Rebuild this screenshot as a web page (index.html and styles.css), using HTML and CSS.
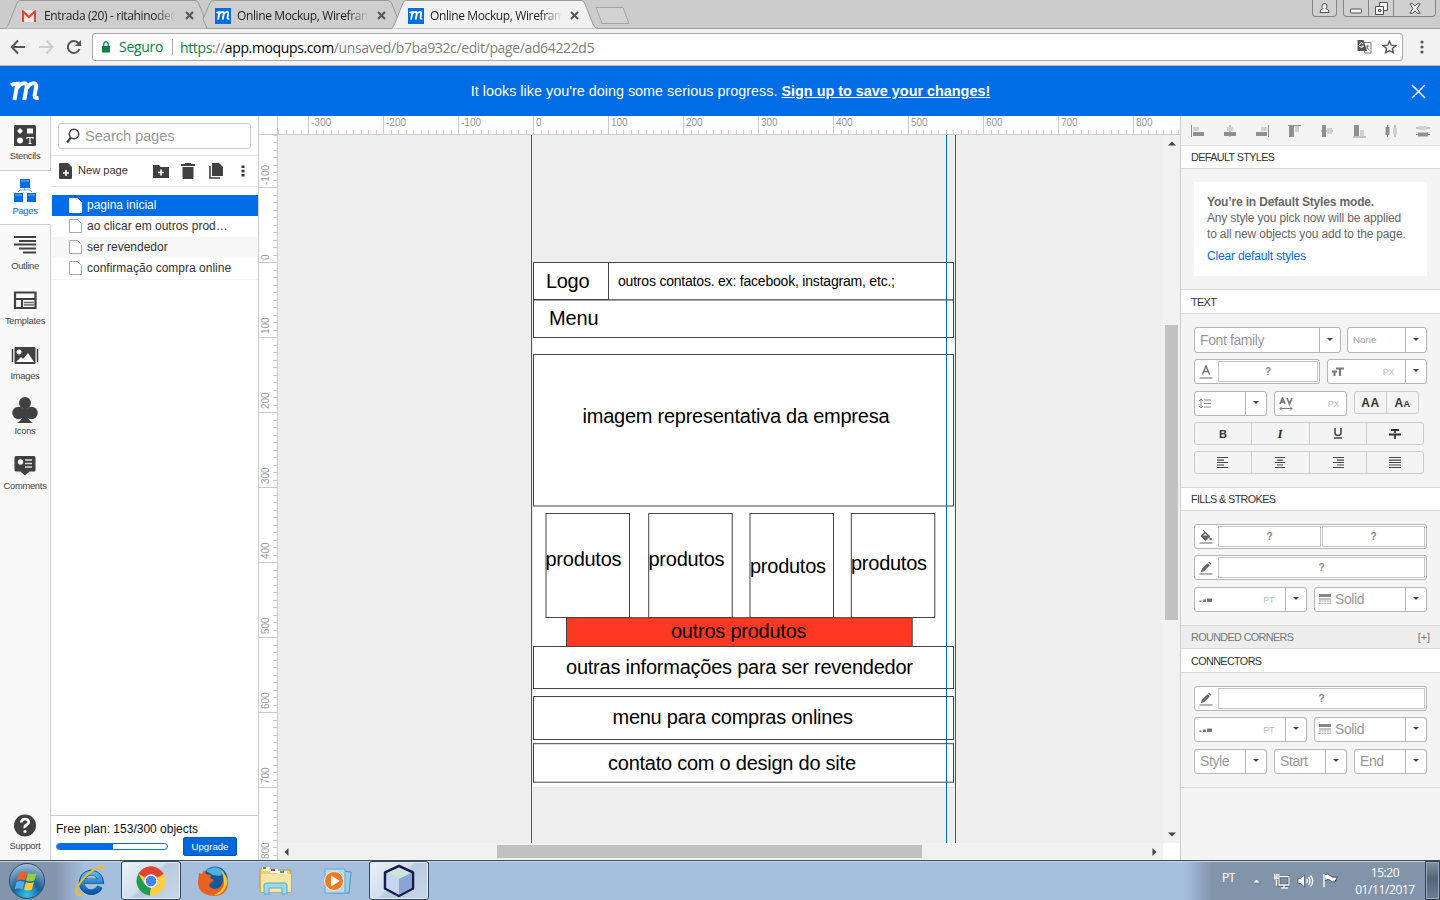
FILE: index.html
```html
<!DOCTYPE html>
<html lang="pt">
<head>
<meta charset="utf-8">
<title>Online Mockup, Wireframe</title>
<link rel="stylesheet" href="styles.css">
</head>
<body>
<svg class="defs" width="0" height="0">
  <defs>
    <symbol id="m" viewBox="0 0 30 22"><path d="M1 5.200Q3 3.800 7.300 3.800L4.500 20M6.800 8.500Q10.500 3.300 14 3.300Q17.300 3.300 16.600 7.300L14.300 20M16.400 8.500Q20 3.300 23.500 3.300Q26.800 3.300 26.100 7.300L24.600 15.500Q24.200 18.600 28.600 18" fill="none" stroke="#fff" stroke-width="4"/></symbol>
    <symbol id="pencil" viewBox="0 0 14 14"><path d="M2 11l.7-3L8.500 2.200l2.300 2.300L5 10.300zM9.300 1.500l.9-.9 2.300 2.300-.9.900z" fill="#666"/><path d="M.5 12h13v2H.5z" fill="#b9b1ae"/></symbol>
    <symbol id="weight" viewBox="0 0 14 6"><path d="M.5 3.500h2v1.500h-2zM4 2.500h3V5H4zM8 1.500h5V5H8z" fill="#777"/></symbol>
    <symbol id="lines" viewBox="0 0 12 10"><path d="M0 0h12v3H0zM0 4.500h12v1H0z" fill="#888"/><path d="M0 7h12M0 9.300h12" stroke="#999" stroke-dasharray="2 .6"/></symbol>
  </defs>
</svg>

<header class="tabs">
  <div class="tab">
    <svg class="shape" width="207" height="29"><path d="M.5 28.500Q3 26 4 23L12 3Q13 .5 15.500 .5H190Q192.500 .5 193.500 3L202 24Q203.500 28 206 28.500"/></svg>
    <svg width="14" height="12" viewBox="0 0 14 12"><path d="M0 0h14v12H0z" fill="#eee"/><path d="M1 12V1.500l6 5.500 6-5.500V12" fill="none" stroke="#d9463a" stroke-width="2.200"/></svg>
    <span class="title">Entrada (20) - ritahinode@</span><svg class="x" width="9" height="9"><path d="M1 1l7 7M8 1L1 8"/></svg>
  </div>
  <div class="tab">
    <svg class="shape" width="207" height="29"><path d="M5 19L12 3Q13 .5 15.500 .5H190Q192.500 .5 193.500 3L202 24Q203.500 28 206 28.500H9z" /></svg>
    <span class="fav"><svg width="14" height="11"><use href="#m"/></svg></span>
    <span class="title">Online Mockup, Wirefram</span><svg class="x" width="9" height="9"><path d="M1 1l7 7M8 1L1 8"/></svg>
  </div>
  <div class="tab active">
    <svg class="shape" width="207" height="30"><path d="M.5 28.500Q3 26 4 23L12 3Q13 .5 15.500 .5H190Q192.500 .5 193.500 3L202 24Q203.500 28 206 28.500"/></svg>
    <span class="fav"><svg width="14" height="11"><use href="#m"/></svg></span>
    <span class="title">Online Mockup, Wirefram</span><svg class="x" width="9" height="9"><path d="M1 1l7 7M8 1L1 8"/></svg>
  </div>
  <svg class="newtab" width="35" height="18"><path d="M1 .500H28L34 16.500H7z" fill="#d2d2d2" stroke="#a2a2a2"/></svg>
  <div class="winctl">
    <span class="wb w24"><svg width="11" height="11" viewBox="0 0 11 11"><path d="M3 3a2.500 2.500 0 015 0Q8 5 6.800 5.600Q10 6 10 9.500H1Q1 6 4.200 5.600Q3 5 3 3z"/></svg></span>
    <span class="wgroup"><span class="wb w25"><svg width="12" height="11"><rect x=".5" y="6" width="11" height="4" rx="1"/></svg></span><span class="wb w25"><svg width="13" height="13"><path d="M4.500 .5h8v8h-8z"/><path d="M.5 4.500h8v8h-8zM3.500 7.500h2.500v2H3.500z"/></svg></span><span class="wb w42"><svg width="12" height="11"><path d="M.8 .8h3L6 3.200 8.200 .8h3L8 5.500l3.200 4.700h-3L6 7.800 3.800 10.200h-3L4 5.500z"/></svg></span></span>
  </div>
</header>

<div class="toolbar">
  <svg width="86" height="20" viewBox="0 0 86 20"><path d="M16 10H3M9 3.500L2.800 10l6.200 6.500" stroke="#555" stroke-width="2" fill="none"/><path d="M30 10h13M37.500 3.500l6 6.500-6 6.500" stroke="#ccc" stroke-width="2" fill="none"/><path d="M69.500 6.200A6 6 0 1070.500 12" stroke="#555" stroke-width="2" fill="none"/><path d="M72 3v6h-6z" fill="#555"/></svg>
  <div class="omni">
    <svg width="8" height="12" viewBox="0 0 8 12"><path d="M0 5h8v6.500H0z" fill="#0b8043"/><path d="M1.800 5V3a2.200 2.200 0 014.400 0v2" fill="none" stroke="#0b8043" stroke-width="1.300"/></svg>
    <span class="secure">Seguro</span>
    <span class="url"><i>https</i>://<b>app.moqups.com</b>/unsaved/b7ba932c/edit/page/ad64222d5</span>
    <svg class="trans" width="15" height="14" viewBox="0 0 15 14"><path d="M5 2.500h9V13H8z" fill="#fff" stroke="#777"/><path d="M.5 0h6l3.500 11H.5z" fill="#555"/><path d="M6.200 3.800A2.200 2.200 0 106.500 6H4.500" fill="none" stroke="#fff"/><path d="M8.500 6h4M10.500 5v1Q10.500 9 8.500 10M9.500 7l3 3.500" stroke="#777" fill="none"/></svg>
    <svg width="15" height="14" viewBox="0 0 15 14"><path d="M7.500 1.200l1.800 4 4.400.4-3.300 2.900 1 4.300-3.900-2.300-3.900 2.300 1-4.300L1.300 5.600l4.400-.4z" fill="none" stroke="#555" stroke-width="1.400"/></svg>
  </div>
  <svg width="4" height="14"><circle cx="2" cy="2" r="1.600" fill="#555"/><circle cx="2" cy="7" r="1.600" fill="#555"/><circle cx="2" cy="12" r="1.600" fill="#555"/></svg>
</div>

<div class="banner">
  <svg class="logo" width="30" height="22"><use href="#m"/></svg>
  <p class="msg">It looks like you're doing some serious progress. <a>Sign up to save your changes!</a></p>
  <svg width="15" height="15"><path d="M1 1l13 13M14 1L1 14" stroke="#fff" stroke-width="1.500"/></svg>
</div>

<main class="app">
  <nav class="rail">
    <div class="item first"><svg width="28" height="28" viewBox="0 0 28 28"><rect x="3" y="4" width="22" height="21" rx="1.500" fill="#404040"/><path d="M9 7l3 3-3 3-3-3zM16 7.500h6v5h-6z" fill="#fff"/><circle cx="9" cy="19.500" r="3" fill="#fff"/><path d="M16 18v-1.500h6V18M19 16.500v6M17.500 22.500h3" stroke="#fff" stroke-width="1.200" fill="none"/></svg>Stencils</div>
    <div class="item on"><svg width="28" height="28" viewBox="0 0 28 28"><path d="M9 3h10v9H9zM3 17h9v9H3zM16 17h9v9h-9z" fill="#006ce6"/><path d="M10 5h8M4 19h7M17 19h7" stroke="#7db4f4"/><path d="M13.500 12v2M7 16l2-2h10l2 2" stroke="#6da8ee" fill="none"/></svg>Pages</div>
    <div class="item third"><svg width="28" height="28" viewBox="0 0 28 28"><path d="M4 6h22M9 10h17M4 13.500h22M9 17.500h17M13 21.500h13" transform="translate(-1 0)" stroke="#404040" stroke-width="2"/></svg>Outline</div>
    <div class="item"><svg width="28" height="28" viewBox="0 0 28 28"><path d="M4 6.500h20.500v15.500H4zM4 13h20.500M11 13v9" fill="none" stroke="#404040" stroke-width="2.200"/><path d="M13 16.500h10M13 19h10" stroke="#666" stroke-width="1.300"/></svg>Templates</div>
    <div class="item"><svg width="28" height="28" viewBox="0 0 28 28"><rect x="3.500" y="6" width="21" height="17" rx="1" fill="#404040"/><path d="M1.500 8v13M26.500 8v13" stroke="#404040" stroke-width="1.500"/><circle cx="8" cy="11" r="2.500" fill="#fff"/><path d="M5 21l5-5 2 2 5-6 6 9z" fill="#fff"/></svg>Images</div>
    <div class="item"><svg width="28" height="28" viewBox="0 0 28 28"><g fill="#404040"><circle cx="14" cy="7" r="6"/><circle cx="7.500" cy="17" r="6.200"/><circle cx="20.500" cy="17" r="6.200"/><path d="M12 10h4v10q2 5 6 7H6q4-2 6-7z"/></g></svg>Icons</div>
    <div class="item"><svg width="28" height="28" viewBox="0 0 28 28"><path d="M5 5h18q1.500 0 1.500 1.500v12.500q0 1.500-1.500 1.500h-4.500L14 24.500l-4.500-4H5q-1.500 0-1.500-1.500V6.500Q3.500 5 5 5z" fill="#404040"/><circle cx="9.500" cy="11" r="2.700" fill="#fff"/><path d="M14 9h7M14 12.500h7M14 16h7" stroke="#ddd" stroke-width="1.300"/></svg>Comments</div>
    <div class="item support"><svg width="28" height="28" viewBox="0 0 28 28"><circle cx="14" cy="14.500" r="11" fill="#404040"/><path d="M10.300 11.500Q10.500 8 14 8T17.700 11Q17.700 13 15.500 14T14 17" fill="none" stroke="#fff" stroke-width="2.700"/><circle cx="14" cy="20.500" r="1.600" fill="#fff"/></svg>Support</div>
  </nav>

  <section class="pages">
    <div class="search"><svg width="14" height="16" viewBox="0 0 14 16"><circle cx="8" cy="6" r="4.700" fill="none" stroke="#404040" stroke-width="1.500"/><path d="M5 9.500L1 14.500" stroke="#404040" stroke-width="2.200"/></svg>Search pages</div>
    <div class="ptools">
      <svg width="13" height="16" viewBox="0 0 13 16"><path d="M0 1q0-1 1-1h8l4 4v11q0 1-1 1H1q-1 0-1-1z" fill="#404040"/><path d="M7 7v6M4 10h6" stroke="#fff" stroke-width="1.600"/></svg>
      <span>New page</span>
      <svg width="16" height="14" viewBox="0 0 16 14"><path d="M0 1h6l1.500 2H16v11H0z" fill="#404040"/><path d="M8 5.500v6M5 8.500h6" stroke="#fff" stroke-width="1.600"/></svg>
      <svg class="trash" width="14" height="16" viewBox="0 0 14 16"><path d="M0 1h4V0h6v1h4v2H0zM1.500 4h11v11q0 1-1 1h-9q-1 0-1-1z" fill="#404040"/></svg>
      <svg class="copy" width="14" height="16" viewBox="0 0 14 16"><path d="M3 0h7l4 4v9H3z" fill="#404040"/><path d="M1 3v12h10" fill="none" stroke="#404040" stroke-width="1.600"/></svg>
      <svg class="more" width="4" height="12"><path d="M.5 .5h3v2.500h-3zM.5 4.700h3v2.500h-3zM.5 9h3v2.500h-3z" fill="#333"/></svg>
    </div>
    <ul class="list">
      <li class="sel"><svg width="13" height="15"><path d="M.5 .5h8l4 4v10H.5z"/></svg><span>pagina inicial</span></li>
      <li><svg width="13" height="15"><path d="M.5 .5h8l4 4v9H.5z"/></svg><span>ao clicar em outros prod…</span></li>
      <li class="alt"><svg width="13" height="15"><path d="M.5 .5h8l4 4v9H.5z"/></svg><span>ser revendedor</span></li>
      <li><svg width="13" height="15"><path d="M.5 .5h8l4 4v9H.5z"/></svg><span>confirmação compra online</span></li>
    </ul>
    <footer class="plan">
      <p>Free plan: 153/300 objects</p>
      <div class="planrow"><span class="bar"><span class="fill"></span></span><span class="btn">Upgrade</span></div>
    </footer>
  </section>

  <section class="stage">
    <svg class="hruler" width="922" height="19" viewBox="259 116 922 19">
      <defs>
        <pattern id="hm" x="533" y="116" width="75" height="19" patternUnits="userSpaceOnUse"><path d="M0 0h1v18H0zM8 14h1v4H8zM15 14h1v4h-1zM23 14h1v4h-1zM30 14h1v4h-1zM38 14h1v4h-1zM45 14h1v4h-1zM53 14h1v4h-1zM60 14h1v4h-1zM68 14h1v4h-1z" fill="#ccc"/></pattern>
      </defs>
      <path d="M278 116h902v18H278z" fill="url(#hm)"/><path d="M259 134h922v1H259zM277 116h1v19h-1z" fill="#ccc"/>
      <g class="num"><text x="311" y="126">-300</text><text x="386" y="126">-200</text><text x="461" y="126">-100</text><text x="536" y="126">0</text><text x="611" y="126">100</text><text x="686" y="126">200</text><text x="761" y="126">300</text><text x="836" y="126">400</text><text x="911" y="126">500</text><text x="986" y="126">600</text><text x="1061" y="126">700</text><text x="1136" y="126">800</text></g>
    </svg>
    <div class="work">
      <svg class="vruler" width="19" height="725" viewBox="259 135 19 725">
        <defs>
          <pattern id="vm" x="259" y="262" width="19" height="75" patternUnits="userSpaceOnUse"><path d="M0 0h19v1H0zM14 8h4v1h-4zM14 15h4v1h-4zM14 23h4v1h-4zM14 30h4v1h-4zM14 38h4v1h-4zM14 45h4v1h-4zM14 53h4v1h-4zM14 60h4v1h-4zM14 68h4v1h-4z" fill="#ccc"/></pattern>
        </defs>
        <path d="M259 135h18v725h-18z" fill="url(#vm)"/><path d="M277 135h1v725h-1z" fill="#ccc"/>
        <g class="num"><text transform="translate(269 185) rotate(-90)">-100</text><text transform="translate(269 260) rotate(-90)">0</text><text transform="translate(269 334) rotate(-90)">100</text><text transform="translate(269 409) rotate(-90)">200</text><text transform="translate(269 484) rotate(-90)">300</text><text transform="translate(269 559) rotate(-90)">400</text><text transform="translate(269 634) rotate(-90)">500</text><text transform="translate(269 709) rotate(-90)">600</text><text transform="translate(269 784) rotate(-90)">700</text><text transform="translate(269 859) rotate(-90)">800</text></g>
      </svg>
      <div class="view">
        <svg class="canvas" width="885" height="708" viewBox="278 135 885 708">
          <rect x="533" y="262" width="421" height="525" fill="#fff"/><path d="M533 787.500h422" stroke="#e2e2e2"/>
          <g class="box">
            <rect x="533.500" y="262.500" width="420" height="37.500"/><rect x="533.500" y="262.500" width="75" height="37"/>
            <rect x="533.500" y="300" width="420" height="37.500"/><rect x="533.500" y="354.500" width="420" height="151.500"/>
            <rect x="546" y="513.500" width="83.500" height="104"/><rect x="648.700" y="513.500" width="83.500" height="104"/><rect x="750" y="513.500" width="83.500" height="104"/><rect x="851.300" y="513.500" width="83.500" height="104"/>
            <rect x="566.500" y="617.700" width="345.700" height="28.800" class="red"/>
            <rect x="533.500" y="646.500" width="420" height="42"/><rect x="533.500" y="696.500" width="420" height="43"/><rect x="533.500" y="743.700" width="420" height="38.500"/>
          </g>
          <g class="word">
            <text x="546" y="288" textLength="43.500">Logo</text><text class="small" x="618" y="286" textLength="277">outros contatos. ex: facebook, instagram, etc.;</text>
            <text x="549" y="325" textLength="49.500">Menu</text><text x="582.500" y="423" textLength="307">imagem representativa da empresa</text>
            <text x="545.500" y="566" textLength="76">produtos</text><text x="648.500" y="566" textLength="76">produtos</text><text x="750" y="573" textLength="76">produtos</text><text x="851" y="570" textLength="76">produtos</text>
            <text x="671" y="638" textLength="135.500">outros produtos</text><text x="566" y="674" textLength="347">outras informações para ser revendedor</text>
            <text x="612.500" y="724" textLength="240.500">menu para compras onlines</text><text x="608" y="770" textLength="248">contato com o design do site</text>
          </g>
          <path d="M531.500 135v708M946.500 135v708M955.500 135v708" stroke="#006cdc"/>
        </svg>
        <div class="vscroll"><svg width="8" height="5"><path d="M0 4.500L4 .5l4 4z"/></svg><span class="vthumb"></span><svg width="8" height="5"><path d="M0 .5h8l-4 4z"/></svg></div>
        <div class="hscroll"><svg width="5" height="8"><path d="M4.500 0v8l-4-4z"/></svg><span class="hthumb"></span><svg width="5" height="8"><path d="M.5 0l4 4-4 4z"/></svg></div>
        <div class="corner"></div>
      </div>
    </div>
  </section>

  <aside class="props">
    <div class="align">
      <svg width="14" height="14"><path class="d" d="M2 8h11v4H2zM0 1h1v12H0z"/><path class="l" d="M2 3h6v4H2z"/></svg>
      <svg width="14" height="14"><path class="d" d="M1 8h12v4H1zM6.500 1h1v12h-1z"/><path class="l" d="M4 3h6v4H4z"/></svg>
      <svg width="14" height="14"><path class="d" d="M1 8h11v4H1zM13 1h1v12h-1z"/><path class="l" d="M6 3h6v4H6z"/></svg>
      <svg width="14" height="14"><path class="d" d="M1 1h13v1H1zM2 2h5v11H2z"/><path class="l" d="M8 2h4v6H8z"/></svg>
      <svg width="14" height="14"><path class="d" d="M2 1h4v12H2zM1 6.500h12v1H1z"/><path class="l" d="M7 4h5v6H7z"/></svg>
      <svg width="14" height="14"><path class="d" d="M1 12.500h13v1H1zM2 1h5v11H2z"/><path class="l" d="M8 6h4v6H8z"/></svg>
      <svg width="14" height="14"><path class="d" d="M1.500 3h4v8h-4zM3 1h1v12H3zM10.500 1h1v12h-1z"/><path class="l" d="M9 4h4v6H9z"/></svg>
      <svg width="14" height="14"><path class="d" d="M2 8.500h10v4H2zM0 10h14v1H0zM0 3.500h14v1H0z"/><path class="l" d="M3 2h8v4H3z"/></svg>
    </div>
    <h2 class="h first">DEFAULT STYLES</h2>
    <div class="body"><div class="note"><b>You’re in Default Styles mode.</b><br>Any style you pick now will be applied<br>to all new objects you add to the page.<a>Clear default styles</a></div></div>
    <h2 class="h h25">TEXT</h2>
    <div class="body">
      <div class="row r26"><div class="sel w147"><span>Font family</span><em></em></div><div class="sel w80 tiny"><span>None</span><em></em></div></div>
      <div class="row g6 r25"><div class="pick w126"><svg width="14" height="14"><path d="M3.500 9.500L7 1l3.500 8.500M4.800 6.500h4.400" fill="none" stroke="#777" stroke-width="1.500"/><path d="M.5 12h13v2H.5z" fill="#b9b1ae"/></svg><q>?</q></div><div class="sel w100"><span class="ic"><svg width="12" height="10"><path d="M0 4.500h5M2.500 4v5M4 1.500h8M8 1v8" stroke="#777" stroke-width="2"/></svg><small>PX</small></span><em></em></div></div>
      <div class="row g7 r25"><div class="sel w73"><span class="ic"><svg width="12" height="11"><path d="M2 1v9M0 3l2-2 2 2M0 8l2 2 2-2M5 2h7M5 5.500h7M5 9h7" fill="none" stroke="#888"/></svg></span><em></em></div><div class="sel w73"><span class="ic"><svg width="14" height="14"><path d="M1 7l2.500-6L6 7M2 5h3M8 1l2.500 6L13 1" fill="none" stroke="#777" stroke-width="1.700"/><path d="M1 11.500h12M3 9.500l-2 2 2 2M11 9.500l2 2-2 2" fill="none" stroke="#777"/></svg><small>PX</small></span></div>
        <div class="btns w65"><span>AA</span><span>A<small>A</small></span></div></div>
      <div class="row g6 r23"><div class="btns w230"><span class="fmt">B</span><span class="fmt it">I</span><span><svg width="10" height="11"><path d="M2 0v4.500Q2 7.500 5 7.500T8 4.500V0M1 10h8" fill="none" stroke="#444" stroke-width="1.500"/></svg></span><span><svg width="12" height="10"><path d="M2 1h8M6 1v3M6 6v4M0 5.500h12" fill="none" stroke="#333" stroke-width="1.800"/></svg></span></div></div>
      <div class="row g6 r23"><div class="btns w230 al"><span><svg width="12" height="11"><path d="M0 .5h11M0 3.100h7M0 5.500h11M0 8h7M0 10.500h11"/></svg></span><span><svg width="12" height="11"><path d="M1 .5h10M3 3.100h6M1 5.500h10M3 8h6M1 10.500h10"/></svg></span><span><svg width="12" height="11"><path d="M1 .5h11M5 3.100h7M1 5.500h11M5 8h7M1 10.500h11"/></svg></span><span><svg width="12" height="11"><path d="M0 .5h12M0 3.100h12M0 5.500h12M0 8h12M0 10.500h12"/></svg></span></div></div>
    </div>
    <h2 class="h h24">FILLS &amp; STROKES</h2>
    <div class="body">
      <div class="row r25"><div class="pick"><svg width="14" height="14"><path d="M2 6l4-4 5 4.500-4.500 4zM4 0l3 3" fill="#666" stroke="#666"/><path d="M4 5.500L6 3.500l2.500 2z" fill="#fff"/><circle cx="11.500" cy="9" r="1.300" fill="#666"/><path d="M.5 12h13v2H.5z" fill="#b9b1ae"/></svg><q>?</q><q>?</q></div></div>
      <div class="row g6 r25"><div class="pick"><svg width="14" height="14"><use href="#pencil"/></svg><q>?</q></div></div>
      <div class="row g7 r25"><div class="sel w113"><span class="ic"><svg width="14" height="6"><use href="#weight"/></svg><small>PT</small></span><em></em></div><div class="sel w113"><span class="ic s"><svg width="12" height="10"><use href="#lines"/></svg>Solid</span><em></em></div></div>
    </div>
    <h2 class="h h23">ROUNDED CORNERS<span>[+]</span></h2>
    <h2 class="h h25">CONNECTORS</h2>
    <div class="body last">
      <div class="row r25"><div class="pick"><svg width="14" height="14"><use href="#pencil"/></svg><q>?</q></div></div>
      <div class="row g6 r25"><div class="sel w113"><span class="ic"><svg width="14" height="6"><use href="#weight"/></svg><small>PT</small></span><em></em></div><div class="sel w113"><span class="ic s"><svg width="12" height="10"><use href="#lines"/></svg>Solid</span><em></em></div></div>
      <div class="row g7 r25"><div class="sel w73"><span>Style</span><em></em></div><div class="sel w73"><span>Start</span><em></em></div><div class="sel w73"><span>End</span><em></em></div></div>
    </div>
  </aside>
</main>

<footer class="taskbar">
  <div class="task start"><svg width="38" height="38" viewBox="0 0 38 38"><defs><radialGradient id="orb" cx=".5" cy=".9" r=".9"><stop offset="0" stop-color="#35c5ee"/><stop offset=".45" stop-color="#1b5f98"/><stop offset="1" stop-color="#a9c2d8"/></radialGradient></defs><circle cx="19" cy="19" r="17.500" fill="url(#orb)" stroke="#2a4a6c"/><path d="M11 11q3.500-2.500 8 0l-2 7.500q-4-2-8 0z" fill="#e8602c"/><path d="M20 11q4 2 8.500 0l-2 7.500q-4.500 2-8.500 0z" fill="#9ccb3b"/><path d="M8.500 20q4-2 8 0l-2 7.500q-4-2.500-8 0z" fill="#51a9e8"/><path d="M18 20q4 2 8 0l-2 7.500q-4 2-8 0z" fill="#fbcb3a"/></svg></div>
  <div class="task ie"><svg width="34" height="34" viewBox="0 0 34 34"><defs><linearGradient id="ieg" y2="1" x2="0"><stop stop-color="#50b8f0"/><stop offset="1" stop-color="#0b5cab"/></linearGradient></defs><g transform="translate(1.500 .5) scale(.93)"><path d="M27.500 24A10.500 10.500 0 1128.500 18H11" fill="none" stroke="#174f8c" stroke-width="6"/><path d="M27 23.500A10 10 0 1128 18H11" fill="none" stroke="url(#ieg)" stroke-width="4.600"/></g><path d="M30 6Q32 1 27 3Q13 8 5 22Q1 30 6 31Q8 31 11 29" fill="none" stroke="#eebc2e" stroke-width="2"/></svg></div>
  <div class="task open chrome"><svg width="30" height="30" viewBox="0 0 30 30"><circle cx="15" cy="15" r="14.500" fill="#fc4"/><path d="M15 15L2.500 7.700A14.500 14.500 0 0127.600 8z" fill="#db4437"/><path d="M15 8h12.600A14.500 14.500 0 002.500 7.700z" fill="#db4437"/><path d="M2.500 7.700L8.500 18 15 22l-1 7.500A14.500 14.500 0 012.500 7.700z" fill="#219a57"/><path d="M15 22l-1 7.400 7-11z" fill="#fc4"/><circle cx="15" cy="15" r="6.700" fill="#fff"/><circle cx="15" cy="15" r="5.300" fill="#4285f4"/></svg></div>
  <div class="task fox"><svg width="32" height="32" viewBox="0 0 32 32"><circle cx="18" cy="14" r="12.500" fill="#15599b"/><path d="M9 6Q19-2 27 7l-4 4-7-1z" fill="#4fb2de"/><path d="M2 8l3 1 2-4 2 4 5 1-1 3 4 2-3 3q-3 1-1 4 5 4 10 0 5-6 2-14 7 5 6 12-2 11-14 11Q1 30 1 17z" fill="#e7601f"/><path d="M24 5q10 9 4 19-5 7-11 6 10-5 10-12 0-8-3-13z" fill="#fcc931"/></svg></div>
  <div class="task fold"><svg width="34" height="32" viewBox="0 0 34 32"><path d="M2 5q0-2 2-2h8l2 2h17q2 0 2 2v20H2z" fill="#e9cf78" stroke="#b99739"/><path d="M4 2h8v4H4z" fill="#fff7cc"/><path d="M5 2h3v2H5z" fill="#3aa43b"/><path d="M12 4h8v4h-8z" fill="#fff"/><path d="M13 4h4v2h-4z" fill="#d33"/><path d="M20 6h9v3h-9z" fill="#fff"/><path d="M22 6h4v2h-4z" fill="#39c"/><path d="M3 9h30v18H3z" fill="#f7e6a1"/><path d="M6 29V20q0-2 3-2h17q3 0 3 2v9h-5v-6H11v6z" fill="#9bd8ed" stroke="#58aac7"/></svg></div>
  <div class="task wmp"><svg width="30" height="28" viewBox="0 0 30 28"><path d="M8 3l20 2-2 21-18 0z" fill="#9bcde5" stroke="#4a94bd"/><path d="M2 2h20v24H2z" fill="#b9dcec" stroke="#65a9ca"/><circle cx="11" cy="14" r="9.500" fill="#f37a1f" stroke="#e7eef2"/><path d="M8 8.500l9 5.500-9 5.500z" fill="#fff"/></svg></div>
  <div class="task open cube"><svg width="32" height="34" viewBox="0 0 32 34"><path d="M16 2l14 6.500v16L16 32 2 24.500v-16z" fill="#9db7dc" stroke="#181b4a" stroke-width="2.500" stroke-linejoin="round"/><path d="M16 3.500L28 9l-12 6L4 9z" fill="#cce3dc"/><path d="M16 15l12.500-6v15L16 30.500z" fill="#88a6d4"/><path d="M16 15L3.500 9v15L16 30.500z" fill="#c6d6ee"/></svg></div>
  <div class="tray">
    <span class="lang">PT</span>
    <svg class="up" width="9" height="6"><path d="M.5 5l4-4 4 4z" fill="#fff" stroke="#52657d" stroke-width=".7"/></svg>
    <svg class="net" width="16" height="16" viewBox="0 0 16 16"><path d="M5 3.500h10v8.500H5zM7 15h7M10 12v3" fill="#7d8da2" stroke="#333f4e" stroke-width="2.500"/><path d="M5 3.500h10v8.500H5zM7 15h7M10 12v3M2.500 7v5.500M.8 1v4.500h4V1M2.800 1v5" fill="none" stroke="#fff" stroke-width="1.300"/></svg>
    <svg class="vol" width="17" height="14" viewBox="0 0 17 14"><path d="M1 4.500h2.500L7.500 1v12L3.500 9.500H1z" fill="#fff" stroke="#4a596b" stroke-width=".8"/><path d="M9.500 5q1.500 2 0 4M11.500 3q3 4 0 8M13.500 1.500q4.500 5.500 0 11" fill="none" stroke="#fff" stroke-width="1.300"/></svg>
    <svg width="16" height="15" viewBox="0 0 16 15"><path d="M2 .5V15M2.500 1.500Q6 0 8 2.500T15.500 4L13 9Q10 9.500 8.500 7.500T3 7.500z" fill="#fff" stroke="#3d4b5c"/><path d="M2 1v13.500" stroke="#fff" stroke-width="1.500"/></svg>
    <div class="clock">15:20<br>01/11/2017</div>
    <span class="peek"></span>
  </div>
</footer>
</body>
</html>
```
FILE: styles.css
```css
*{box-sizing:border-box}
body{margin:0;width:1440px;height:900px;overflow:hidden;display:flex;flex-direction:column;font-family:"Liberation Sans",Arial,sans-serif;background:#fff;color:#333}
svg{display:block;flex:none}
p,ul,h2{margin:0;padding:0}
.defs{position:absolute}

/* browser window */
.tabs{height:29px;background:#ccc;border-bottom:1px solid #999;display:flex;align-items:flex-start;padding-left:5px;flex:none;font-family:"Open Sans","Noto Sans",sans-serif}
.tab{position:relative;width:193px;height:29px;display:flex;align-items:center;padding:2px 0 0 17px;font-size:12px;letter-spacing:-.38px;color:#222}
.tab>*{position:relative}
.tab .shape{position:absolute;left:0;top:0}
.shape path{fill:#cecece;stroke:#999}
.active .shape path{fill:#f1f1f1}
.fav{width:16px;height:16px;background:#006ce6;display:grid;place-items:center}
.title{width:140px;margin-left:6px;white-space:nowrap;-webkit-mask-image:linear-gradient(90deg,#000 110px,transparent 132px);mask-image:linear-gradient(90deg,#000 110px,transparent 132px)}
.tab:first-child .title{margin-left:8px}
.tab:first-child .x{margin-left:1px}
.x{margin-left:0}
.x path{stroke:#555;stroke-width:2}
.newtab{margin:7px 0 0 11px}
.winctl{display:flex;gap:6px;margin:0 4px 0 auto}
.wgroup{display:flex}
.wb{height:17px;border:1px solid #858585;border-top:0;display:grid;place-items:center;background:#d0d0d0;border-radius:0 0 4px 4px}
.wgroup .wb{border-radius:0;margin-left:-1px}
.wgroup .wb:first-child{border-radius:0 0 0 4px;margin-left:0}
.wgroup .wb:last-child{border-radius:0 0 4px 0}
.wb path,.wb rect{fill:#f4f4f4;stroke:#505050}
.w24{width:25px}.w25{width:26px}.w42{width:43px}
.toolbar{height:37px;background:#f2f2f2;border-bottom:1px solid #b3b3b3;display:flex;align-items:center;padding:0 16px 0 9px;flex:none;font-family:"Open Sans","Noto Sans",sans-serif;font-size:14px}
.omni{display:flex;align-items:center;width:1312px;height:28px;margin:0 17px 0 -3px;border:1px solid #a8a8a8;border-radius:3px;background:#fff;padding:0 5px 0 9px}
.secure{color:#0b8043;margin-left:9px;width:54px;border-right:1px solid #aaa;line-height:16px;white-space:nowrap;letter-spacing:-.3px}
.url{margin-left:7px;color:#808080;letter-spacing:-.37px}
.url i{font-style:normal;color:#0b8043}.url b{font-weight:400;color:#000}
.trans{margin:0 10px 0 auto}
.banner{height:50px;background:#006ce6;color:#fff;display:flex;align-items:center;padding:0 14px 0 10px;flex:none}
.msg{flex:1;text-align:center;font-size:14.400px;padding-left:10px}
.msg a{font-weight:700;text-decoration:underline}

/* application */
.app{height:744px;display:flex;flex:none}
.rail{width:51px;background:#f9f9f9;display:flex;flex-direction:column;font-size:9.400px;color:#444;letter-spacing:-.28px}
.item{height:55px;padding-top:5px;display:flex;flex-direction:column;align-items:center;line-height:14px;border-right:1px solid #ccc;flex:none}
.first{border-bottom:1px solid #ccc}
.on{height:54px;background:#fff;color:#006ce6;border-right-color:#fff;border-bottom:1px solid #ccc}
.third{height:56px;padding-top:6px}
.support{flex:1;justify-content:flex-end;padding-bottom:7px}
.pages{width:207px;display:flex;flex-direction:column;background:#fff}
.search{margin:7px 7px 6px;height:26px;border:1px solid #ccc;border-radius:3px;display:flex;align-items:center;gap:5px;padding-left:7px;color:#999;font-size:14.800px;letter-spacing:-.15px}
.ptools{height:32px;border-top:1px solid #e8e8e8;border-bottom:1px solid #e8e8e8;display:flex;align-items:center;padding-left:8px;font-size:11.100px}
.ptools span{margin:0 0 2px 6px;width:75px}
.trash{margin-left:12px}.copy{margin-left:14px}.more{margin-left:18px}
.list{list-style:none;margin:8px 0 0 1px;border-bottom:1px solid #f2f2f2;font-size:12px}
.list li{height:21px;padding:0 0 0 17px;display:flex;align-items:center;gap:5px;white-space:nowrap}
.list span{padding-bottom:2px}
.list path{fill:#fff;stroke:#aaa}
.list .sel{background:#006ce6;color:#fff}.list .sel path{stroke:#fff}
.list .alt{background:#f7f7f7}
.plan{margin-top:auto;height:45px;border-top:1px solid #ccc;padding:6px 0 0 5px;font-size:12px;color:#111}
.plan p{line-height:14px}
.planrow{display:flex;align-items:center;gap:15px}
.bar{width:112px;height:7px;border:1px solid #006ce6;border-radius:4px;display:block;overflow:hidden}
.fill{display:block;width:56px;height:5px;background:#006ce6}
.btn{width:54px;height:19px;margin-top:1px;border:1px solid #0056b8;border-radius:2px;background:#0068dd;color:#fff;text-align:center;font-size:9.600px;line-height:18px}
.stage{width:923px;border-left:1px solid #ccc;border-right:1px solid #ccc;background:#fff}
.work{display:flex}
.num{fill:#999;font-size:10px}
.view{display:grid;grid-template:708px 17px/885px 17px}
.canvas{background:#eee}
.box rect{fill:#fff;stroke:#444}
.box .red{fill:#ff3823}
.word{font-size:20px;fill:#000}.word .small{font-size:14px}
.vscroll,.hscroll{background:#f1f1f1;display:flex;align-items:center}
.vscroll{flex-direction:column;padding:6px 0}
.vthumb{width:13px;height:295px;background:#c1c1c1;margin:179px 0 auto}
.hscroll{padding:0 6px}
.hthumb{width:425px;height:13px;background:#c1c1c1;margin:0 auto 0 208px}
.vscroll path,.hscroll path{fill:#444}

/* style inspector */
.props{width:259px;background:#f4f4f4;color:#888}
.align{height:30px;border-bottom:1px solid #e5e5e5;display:flex;justify-content:space-between;padding:8px 10px 0 10px}
.d{fill:#8f8f8f}.l{fill:#d4d0d0}
.h{background:#fff;color:#333;font-weight:400;font-size:10.800px;letter-spacing:-.62px;height:23px;border-bottom:1px solid #d8d8d8;padding:0 10px;display:flex;align-items:center;justify-content:space-between}
.h span{letter-spacing:0}
.h25{height:25px;border-top:1px solid #d8d8d8}
.h24{height:24px;border-top:1px solid #d8d8d8}
.h23{border-top:1px solid #d8d8d8;border-bottom:0;background:#ededed;color:#777}
.body{padding:13px}
.last{border-bottom:1px solid #d8d8d8}
.note{background:#fff;height:94px;padding:12px 13px;font-size:12px;letter-spacing:-.16px;line-height:16px;color:#666;white-space:nowrap}
.note a{display:block;color:#006ce6;margin-top:6px}
.row{display:flex;justify-content:space-between;align-items:flex-start}
.g6{margin-top:6px}.g7{margin-top:7px}
.r26{height:26px}.r25{height:25px}.r23{height:23px}
.props .sel,.pick{height:100%;border:1px solid #b5b5b5;border-radius:3px;background:#fff;display:flex}
.props .sel>span{flex:1;display:flex;align-items:center;padding:0 0 1px 5px;font-size:14px;letter-spacing:-.4px;color:#999}
.props .tiny>span{font-size:9.800px;letter-spacing:0}
.sel em{width:21px;border-left:1px solid #b5b5b5;display:grid;place-items:center;padding:0 1px 2px 0}
.sel em:after{content:"";border:3px solid transparent;border-top-color:#444;border-bottom:0}
.props .sel .ic{padding:0 11px 0 4px;justify-content:space-between}
.w73 .ic:last-child{padding-right:7px!important}
.props .sel .s{gap:4px;justify-content:flex-start;padding-bottom:1px}
.ic small,.sel small{font-size:9px;color:#bbb}
.pick{width:233px;padding:1px;align-items:center}
.pick>svg{margin:0 5px 0 3px}
.pick q{quotes:none;flex:1;height:21px;border:1px solid #c4c4c4;display:grid;place-items:center;font-size:10px;font-weight:700;color:#888}
.pick q+q{margin-left:1px}
.w147{width:147px}.w80{width:80px}.pick.w126{width:126px}.w100{width:100px}.w73{width:73px}.w65{width:65px}.w230{width:230px}.w113{width:113px}
.btns{height:23px;display:flex;border:1px solid #ccc;border-radius:3px;font-weight:700;font-size:12px;color:#333}
.w65{margin-right:8px}
.btns>span{flex:1;display:flex;align-items:center;justify-content:center;letter-spacing:.5px}
.btns>span+span{border-left:1px solid #ccc}
.btns small{font-size:9px;padding-top:2px}
.fmt{font-size:11px}.it{font-style:italic;font-family:"Liberation Serif",serif;font-size:13px}
.al path{stroke:#444;stroke-width:1.200}

/* taskbar */
.taskbar{height:40px;flex:none;border-top:1px solid #3c4a59;box-shadow:inset 0 1px #c5d7e9;background:linear-gradient(90deg,#8395ad 0,#8395ad 55px,#a6bfdc 84px,#a6bfdc 1185px,#8294aa 1212px);display:flex;align-items:center}
.task{width:58px;height:39px;display:grid;place-items:center;margin-right:4px;flex:none}
.start{width:54px;margin-right:7px}
.open{width:60px;margin:0;border:1px solid #39485b;border-radius:3px;box-shadow:inset 0 0 0 1px #ddecf8;background:linear-gradient(135deg,#eaf1f8 0,#d3dfed 45%,#b9cbe0 50%,#c9d7e7)}
.ie{margin-right:2px}
.fox{margin-left:3px}.wmp{margin:0 2px 0 1px}
.tray{margin-left:auto;display:flex;align-items:center;color:#fff;font-family:"Open Sans","Noto Sans",sans-serif;font-size:12px;letter-spacing:-.4px}
.lang{margin-bottom:6px}
.up{margin:0 13px 0 17px}.net{margin-right:7px}.vol{margin-right:8px}
.clock{text-align:center;line-height:17px;width:60px;margin:0 10px 0 17px;white-space:nowrap}
.peek{width:15px;height:39px;border:1px solid #344252;background:linear-gradient(#8291a4,#536476 45%,#6b7f96);box-shadow:inset 0 0 0 1px #95a6ba}
```
